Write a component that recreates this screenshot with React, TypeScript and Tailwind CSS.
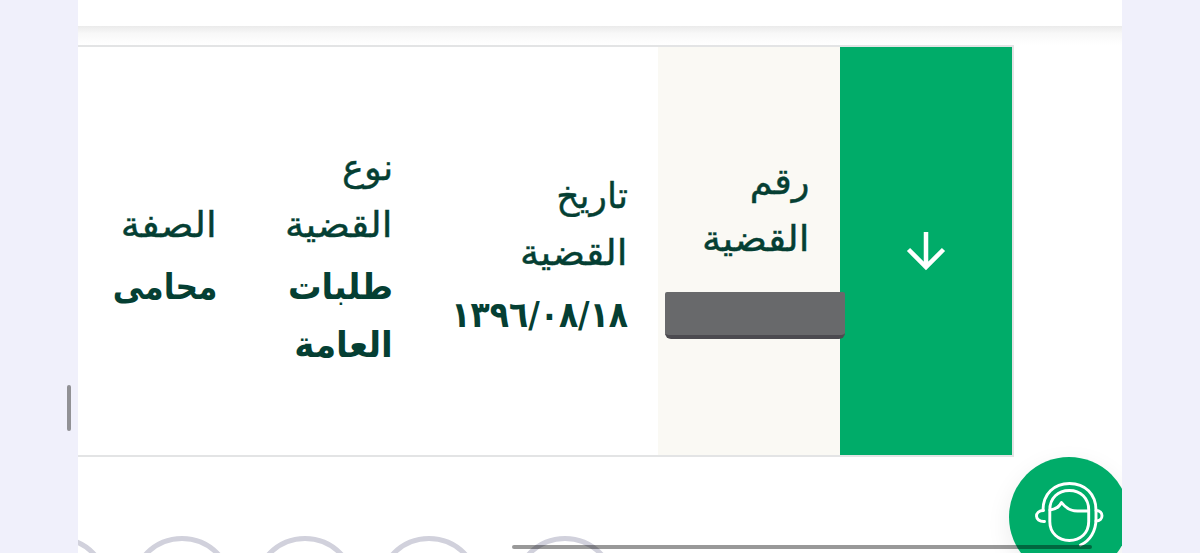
import type { ReactNode } from "react";

const Label = ({ children, fit }: { children: ReactNode; fit: string }) => (
  <div className="h-[57px] whitespace-nowrap text-[36px] leading-[57px] [-webkit-text-stroke:0.4px_#053f33]">
    <span className={`inline-block origin-right ${fit}`}>{children}</span>
  </div>
);

const Value = ({ children, fit }: { children: ReactNode; fit: string }) => (
  <div className="h-[58px] whitespace-nowrap text-[36px] font-bold leading-[58px]">
    <span className={`inline-block origin-right ${fit}`}>{children}</span>
  </div>
);

const AgentIcon = () => (
  <svg
    className="absolute left-[25px] top-[24px] h-[68px] w-[70px]"
    viewBox="0 0 70 68"
    fill="none"
    stroke="white"
    strokeWidth="2.9"
    strokeLinecap="round"
    strokeLinejoin="round"
  >
    <path d="M9 29.500C9 13 20 2.500 35.500 2.500S62 13 62 29.500V38c0 12-6 22-15.500 26" />
    <path d="M9.500 29.500c-9.500 0-9.500 11.500 1 11M62 29.500c8 0 8 10.500 0 10.500" />
    <path d="M15.800 29c0-12 8.200-19.500 19.500-19.500S54.700 17 54.700 29v11.500c0 11.500-8.200 19-19.400 19s-19.500-7.500-19.500-19z" />
    <path d="M16 29c5.500-.5 9.500-3.500 11.500-7.500 4.500 6 9 8.500 16 8.500H54" />
  </svg>
);

const App = () => {
  return (
    <div
      className="relative flex h-[553px] w-[1200px] overflow-hidden bg-[#f0f0fb] font-['DejaVu_Sans','Noto_Sans',sans-serif] text-[#053f33]"
      dir="rtl"
    >
      <div className="flex w-[78px] shrink-0" />
      <main className="relative flex w-[1044px] shrink-0 flex-col overflow-hidden bg-white">
        <header className="h-[26px] shrink-0 bg-white" />
        <div className="h-[19px] shrink-0 bg-linear-to-b from-[#ebebeb] via-[#f8f8f8] via-40% to-white" />
        <section className="mr-[108px] flex h-[412px] shrink-0 border-y-2 border-r-2 border-[#e3e4e5]">
          <div className="flex w-[172px] shrink-0 items-center justify-center bg-[#00ac69]">
            <svg
              className="h-[40px] w-[40px]"
              viewBox="0 0 40 40"
              fill="none"
              stroke="white"
              strokeWidth="4.5"
            >
              <path d="M20 1v35M2.500 18.500 20 36 37.500 18.500" />
            </svg>
          </div>
          <div className="flex w-[182px] shrink-0 flex-col bg-[#faf9f4] pr-[30px] pt-[106px]">
            <Label fit="scale-x-[1.02]">رقم</Label>
            <Label fit="scale-x-[1.07]">القضية</Label>
            <div className="relative mr-[-35px] mt-[25px] h-[47px] w-[180px] rounded-t-xs rounded-b-[6px] border-b-[4px] border-b-[#4c4b50] bg-[#68696b]" />
          </div>
          <div className="w-[235px] shrink-0 pr-[30px] pt-[120px]">
            <Label fit="scale-x-100">تاريخ</Label>
            <Label fit="scale-x-[1.07]">القضية</Label>
            <div className="mt-[5px]">
              <Value fit="scale-x-[0.875]">
                <bdo dir="ltr">١٣٩٦/٠٨/١٨</bdo>
              </Value>
            </div>
          </div>
          <div className="w-[176px] shrink-0 pr-[30px] pt-[92px]">
            <Label fit="scale-x-[1.02]">نوع</Label>
            <Label fit="scale-x-[1.07]">القضية</Label>
            <div className="mt-[5px]">
              <Value fit="scale-x-[0.93]">طلبات</Value>
              <Value fit="scale-x-[0.95]">العامة</Value>
            </div>
          </div>
          <div className="grow pr-[30px] pt-[149px]">
            <Label fit="scale-x-[1.07]">الصفة</Label>
            <div className="mt-[5px]">
              <Value fit="scale-x-[0.87]">محامى</Value>
            </div>
          </div>
        </section>

        <div className="absolute left-[-72px] top-[536px] size-[104px] rounded-full border-[5px] border-[#d1d1dc]" />
        <div className="absolute left-[52px] top-[536px] size-[104px] rounded-full border-[5px] border-[#d1d1dc]" />
        <div className="absolute left-[175px] top-[536px] size-[104px] rounded-full border-[5px] border-[#d1d1dc]" />
        <div className="absolute left-[299px] top-[536px] size-[104px] rounded-full border-[5px] border-[#d1d1dc]" />
        <div className="absolute left-[435px] top-[536px] size-[104px] rounded-full border-[5px] border-[#d1d1dc]" />

        <button
          aria-label="الدعم"
          className="absolute left-[931px] top-[457px] size-[120px] rounded-full bg-[#00ac69] shadow-[0_8px_24px_rgba(0,0,0,0.08)]"
        >
          <AgentIcon />
        </button>
        <div className="absolute left-[434px] top-[545px] h-[4px] w-[580px] rounded-full bg-black/40" />
      </main>
      <div className="absolute left-[67px] top-[385px] h-[46px] w-[4px] rounded-full bg-[#919195]" />
    </div>
  );
};

export default App;
